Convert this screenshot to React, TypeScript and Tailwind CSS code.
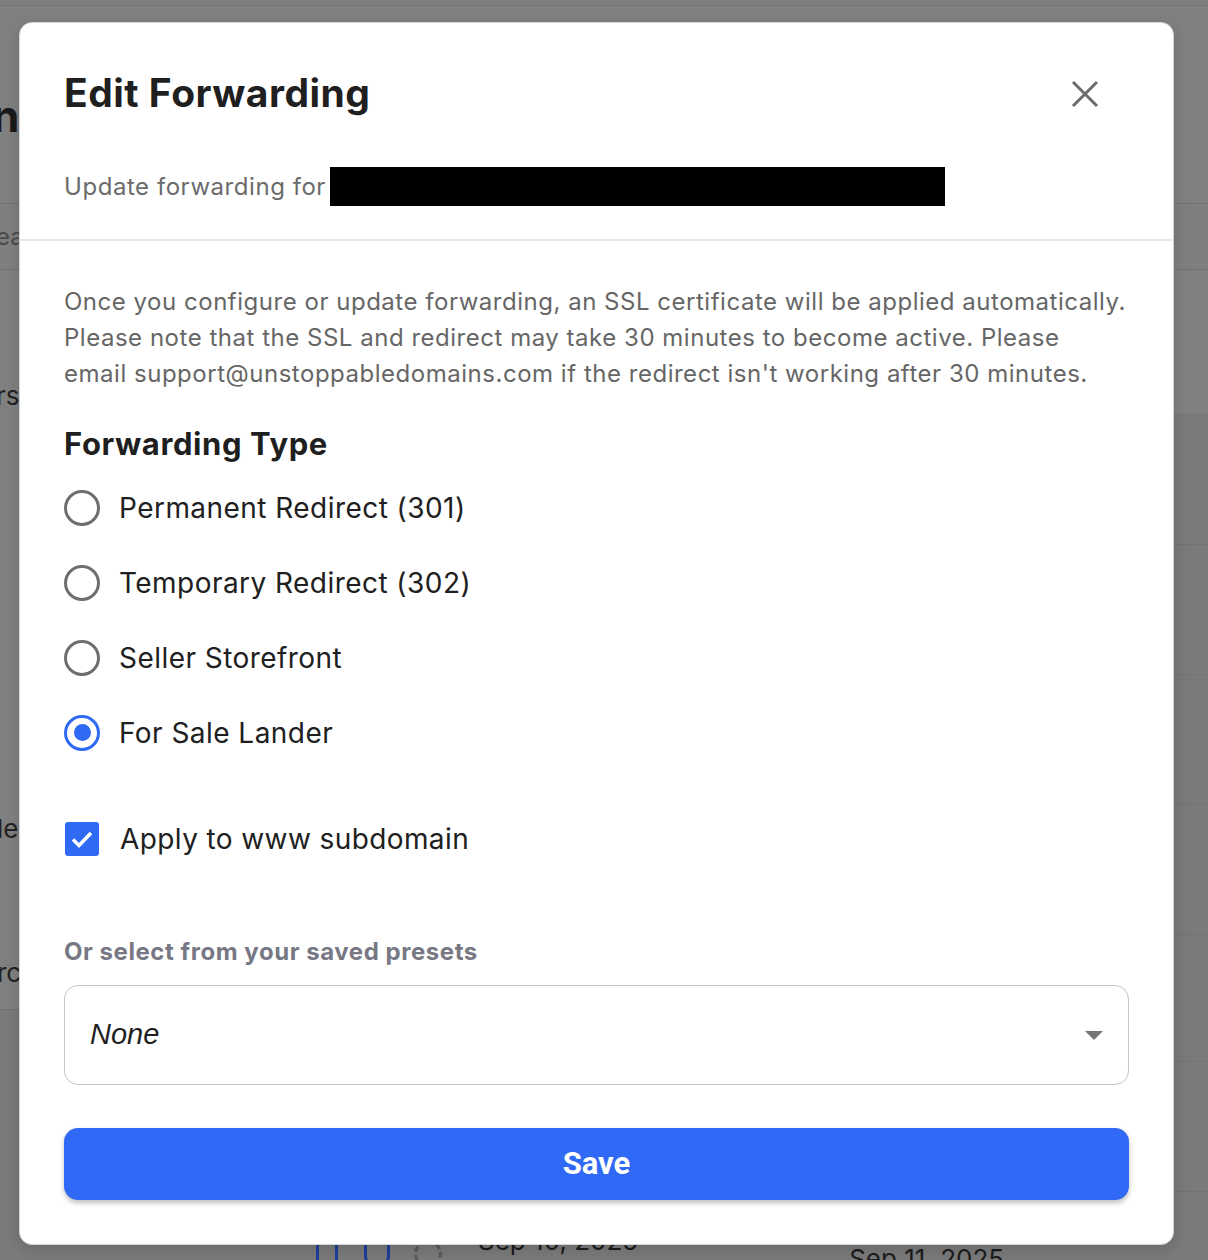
import React from "react";

const radios = [
  { label: "Permanent Redirect (301)", checked: false },
  { label: "Temporary Redirect (302)", checked: false },
  { label: "Seller Storefront", checked: false },
  { label: "For Sale Lander", checked: true },
];

function Radio({ checked }: { checked: boolean }) {
  if (checked) {
    return (
      <span className="flex h-[36px] w-[36px] items-center justify-center rounded-full border-[3px] border-[#2f6af5]">
        <span className="h-[17px] w-[17px] rounded-full bg-[#2f6af5]" />
      </span>
    );
  }
  return <span className="block h-[36px] w-[36px] rounded-full border-[3px] border-[#6e6e6e]" />;
}

export default function App() {
  return (
    <div className="relative h-[1260px] w-full overflow-hidden bg-[#7a7a7a] font-['Inter',sans-serif]">
      {/* Background page (dimmed) */}
      <div className="flex flex-col">
        <div className="h-[6px] border-b border-[#747474] bg-[#7e7e7e]" />
        <div className="flex h-[197px] items-start bg-[#808080]">
          <div className="mt-[84px] w-[19px] overflow-hidden">
            <span className="-ml-[8px] block whitespace-nowrap text-[44px] font-bold leading-[52px] tracking-[-1px] text-[#1a1a1a]">ns</span>
          </div>
        </div>
        <div className="flex h-[67px] items-center border-y border-[#727272] bg-[#7f7f7f]">
          <div className="w-[19px] overflow-hidden">
            <span className="-ml-[4px] block text-[24px] text-[#4a4a4a]">ea</span>
          </div>
        </div>
        <div className="flex">
          <div className="flex w-[19px] flex-col">
            <div className="flex h-[740px] flex-col border-b border-[#747474] bg-[#808080]">
              <div className="h-[109px]" />
              <div className="h-[34px] overflow-hidden">
                <span className="-ml-[4px] block text-[26px] leading-[34px] text-[#222]">rs</span>
              </div>
              <div className="h-[399px]" />
              <div className="h-[34px] overflow-hidden">
                <span className="-ml-[3px] block text-[26px] leading-[34px] text-[#222]">le</span>
              </div>
              <div className="h-[110px]" />
              <div className="h-[34px] overflow-hidden">
                <span className="-ml-[3px] block text-[26px] leading-[34px] text-[#222]">rc</span>
              </div>
            </div>
          </div>
          <div className="flex flex-1 flex-col">
            <div className="h-[145px] border-b border-[#767676] bg-[#808080]" />
            <div className="h-[130px] border-b border-[#747474]" />
            <div className="h-[130px] border-b border-[#747474]" />
            <div className="h-[130px] border-b border-[#747474]" />
            <div className="h-[130px] border-b border-[#747474]" />
            <div className="h-[127px] border-b border-[#747474]" />
            <div className="h-[130px] border-b border-[#747474]" />
            <div className="flex h-[80px] items-start text-[26px] leading-[30px] text-[#1c1c1c]">
              <span className="ml-[297px] mt-[50px] block h-[26px] w-[22px] rounded-[4px] border-[3px] border-[#1d3f9a]" />
              <span className="ml-[26px] mt-[46px] block h-[30px] w-[26px] rounded-b-[12px] border-[3px] border-[#1d3f9a]" />
              <span className="ml-[24px] mt-[48px] block h-[28px] w-[28px] rounded-full border-[3px] border-dashed border-[#5a5a5a]" />
              <span className="ml-[36px] mt-[34px]">Sep 10, 2025</span>
              <span className="ml-[211px] mt-[52px]">Sep 11, 2025</span>
            </div>
          </div>
        </div>
      </div>

      {/* Modal */}
      <div className="absolute left-[19px] top-[22px] w-[1155px] rounded-[13px] border border-[#d4d4da] bg-white shadow-[0_4px_16px_rgba(0,0,0,0.15)]">
        <div className="border-b-2 border-[#e9e9ec] px-[44px] pb-[33px] pt-[47px]">
          <div className="flex items-center justify-between">
            <h1 className="text-[39px] font-bold leading-[46px] tracking-[0.5px] text-[#1f1f1f]">Edit Forwarding</h1>
            <svg width="28" height="28" viewBox="0 0 28 28" className="mr-[30px] mt-[2px]">
              <path d="M2 2L26 26M26 2L2 26" stroke="#6b6b6b" strokeWidth="3" fill="none" />
            </svg>
          </div>
          <div className="mt-[51px] flex h-[39px] items-center">
            <span className="text-[24px] leading-[39px] tracking-[0.55px] text-[#6b6b6b]">Update forwarding for</span>
            <span className="ml-[4px] block h-[39px] w-[615px] bg-black" />
          </div>
        </div>

        <div className="px-[44px] pb-[44px] pt-[43px]">
          <p className="whitespace-nowrap text-[24px] leading-[36px] tracking-[0.52px] text-[#666666]">
            Once you configure or update forwarding, an SSL certificate will be applied automatically.
            <br />
            Please note that the SSL and redirect may take 30 minutes to become active. Please
            <br />
            email support@unstoppabledomains.com if the redirect isn't working after 30 minutes.
          </p>
          <h2 className="mt-[32px] text-[31px] font-bold leading-[40px] tracking-[0.6px] text-[#1f1f1f]">Forwarding Type</h2>
          <div className="mt-[6px] flex flex-col">
            {radios.map((r) => (
              <div key={r.label} className="flex h-[75px] items-center gap-[20px]">
                <Radio checked={r.checked} />
                <span className="-ml-[1px] text-[28px] leading-[36px] tracking-[0.45px] text-[#202020]">{r.label}</span>
              </div>
            ))}
          </div>
          <div className="mt-[31px] flex h-[75px] items-center gap-[21px]">
            <span className="ml-[1px] flex h-[34px] w-[34px] items-center justify-center rounded-[3px] bg-[#2f6af5]">
              <svg width="26" height="26" viewBox="0 0 26 26">
                <path d="M4 13.5L10 19.5L22 7" stroke="white" strokeWidth="3.5" fill="none" />
              </svg>
            </span>
            <span className="text-[28px] leading-[36px] tracking-[0.4px] text-[#202020]">Apply to www subdomain</span>
          </div>
          <div className="mt-[60px] text-[24px] font-bold leading-[32px] tracking-[0.55px] text-[#787884]">Or select from your saved presets</div>
          <div className="mt-[17px] flex h-[100px] items-center justify-between rounded-[14px] border border-[#c4c4c4] pl-[25px] pr-[25px]">
            <span className="font-['Liberation_Sans',sans-serif] text-[29px] italic text-[#1f1f1f]">None</span>
            <svg width="18" height="9" viewBox="0 0 18 9">
              <path d="M0 0H18L9 9Z" fill="#757575" />
            </svg>
          </div>
          <button className="mt-[43px] flex h-[72px] w-full items-center justify-center rounded-[14px] bg-[#2f69f5] shadow-[0_3px_5px_rgba(0,0,0,0.25)]">
            <span className="font-['Roboto',sans-serif] text-[31px] font-bold text-white">Save</span>
          </button>
        </div>
      </div>
    </div>
  );
}
